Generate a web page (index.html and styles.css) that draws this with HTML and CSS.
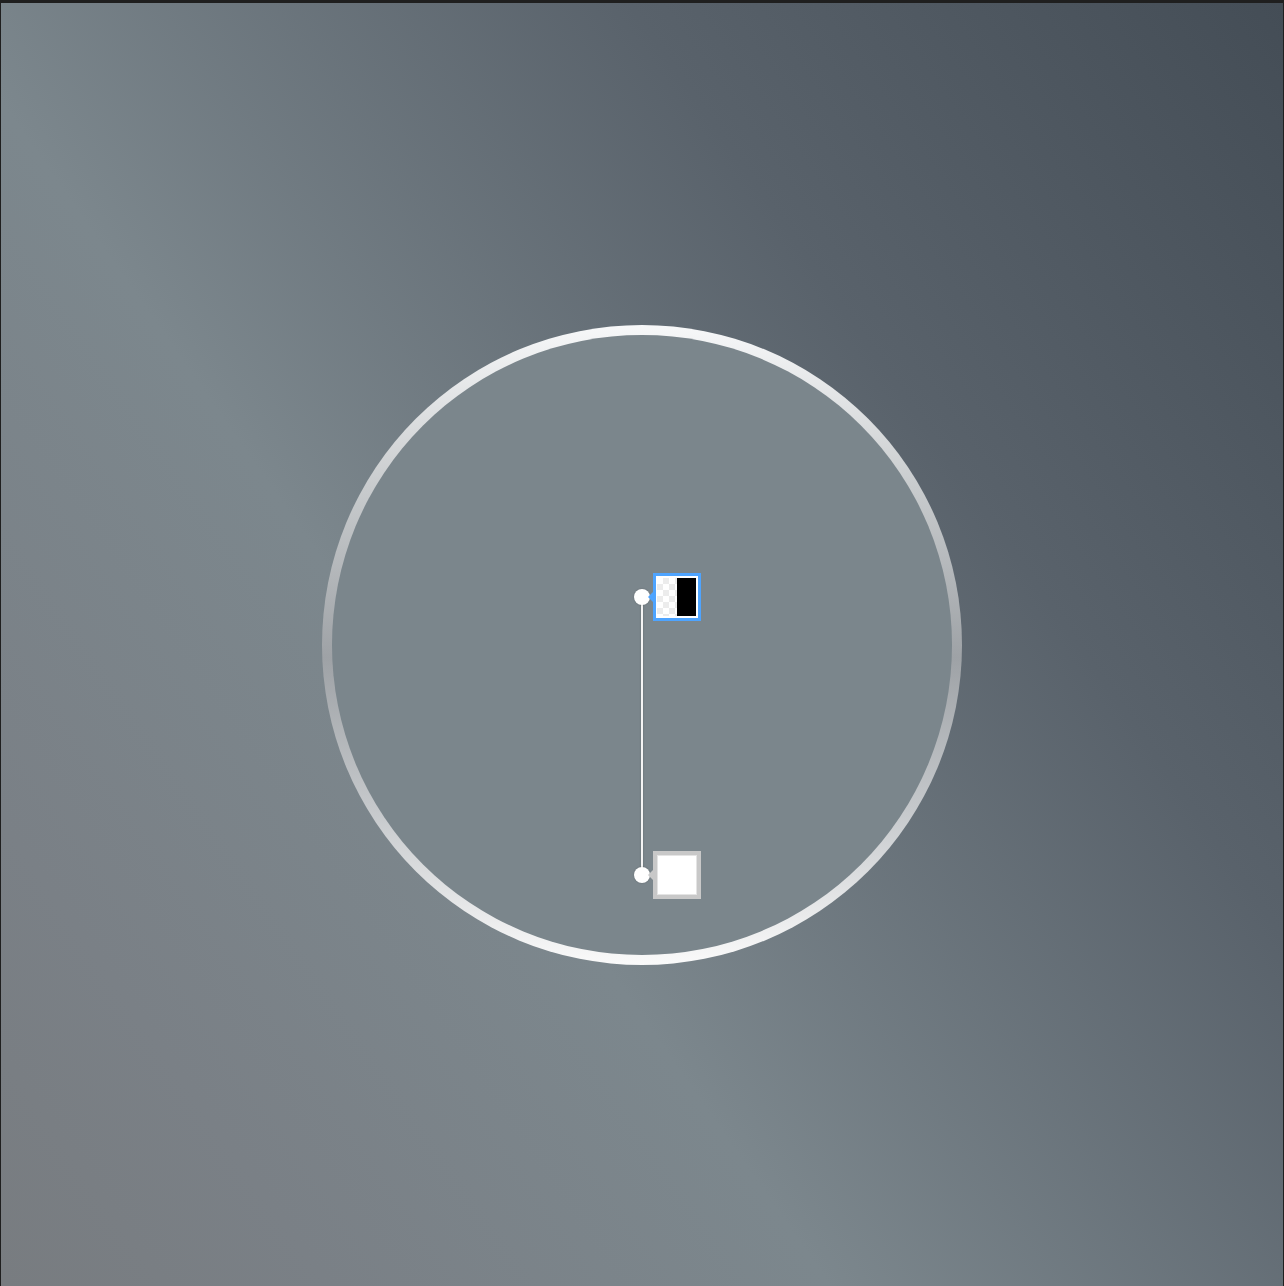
FILE: index.html
```html
<!DOCTYPE html>
<html lang="en">
<head>
<meta charset="utf-8">
<title>Gradient editor</title>
<link rel="stylesheet" href="styles.css">
</head>
<body>
<div class="editor">
  <div class="canvas">
    <div class="ring"><div class="disc"></div></div>
    <div class="axis"></div>
    <div class="handle handle-start"></div>
    <div class="handle handle-end"></div>
    <div class="swatch swatch-start is-selected">
      <div class="swatch-alpha"></div>
      <div class="swatch-solid"></div>
    </div>
    <div class="swatch swatch-end"></div>
  </div>
</div>
</body>
</html>
```

FILE: styles.css
```css
html, body {
  margin: 0;
  padding: 0;
  background: #1f1f1f;
  font-family: "Liberation Sans", Arial, sans-serif;
}

.editor {
  width: 1284px;
  height: 1286px;
  padding: 3px 1px 0 1px;
  box-sizing: border-box;
  overflow: hidden;
}

.canvas {
  position: relative;
  width: 1282px;
  height: 1283px;
  display: flex;
  align-items: center;
  justify-content: center;
  background: linear-gradient(235deg, #444d56 0%, #59626b 30%, #7c878d 62%, #7a8086 85%, #787c80 100%);
}

.ring {
  width: 640px;
  height: 640px;
  border-radius: 50%;
  padding: 10px;
  box-sizing: border-box;
  background: linear-gradient(to bottom, #f7f8f9 0%, #c9ccce 25%, #9ea2a6 52%, #c6c9cc 76%, #fafafa 100%);
}

.disc {
  width: 100%;
  height: 100%;
  border-radius: 50%;
  background: #7b868c;
}

.axis {
  position: absolute;
  left: 640px;
  top: 594px;
  width: 2px;
  height: 278px;
  background: #f4f4f4;
  box-shadow: 0 0 2px rgba(0, 0, 0, 0.25);
}

.handle {
  position: absolute;
  left: 633px;
  width: 16px;
  height: 16px;
  border-radius: 50%;
  background: #ffffff;
  box-shadow: 0 0 2px rgba(0, 0, 0, 0.2);
}

.handle-start { top: 586px; }
.handle-end { top: 864px; }

.swatch {
  position: absolute;
  left: 652px;
  width: 48px;
  height: 48px;
  box-sizing: border-box;
  background: #ffffff;
}

.swatch::before {
  content: "";
  position: absolute;
  left: -7px;
  top: 50%;
  margin-top: -5px;
  border-style: solid;
  border-width: 5px 5px 5px 0;
  border-color: transparent;
}

.swatch-start {
  top: 570px;
  border: 3px solid #4ea4ff;
  padding: 2px 2px 2px 1px;
  display: flex;
}

.swatch-start::before {
  border-right-color: #4ea4ff;
  left: -8px;
}

.swatch-alpha {
  flex: 1;
  background: repeating-conic-gradient(#ececec 0 25%, #ffffff 0 50%) 0 0 / 12px 12px;
}

.swatch-solid {
  flex: 1;
  background: #000000;
}

.swatch-end {
  top: 848px;
  border: 4px solid #c8c8c8;
  box-shadow: inset 0 0 0 1px #e4e4e4;
}

.swatch-end::before {
  border-right-color: #c8c8c8;
  left: -9px;
}
```
